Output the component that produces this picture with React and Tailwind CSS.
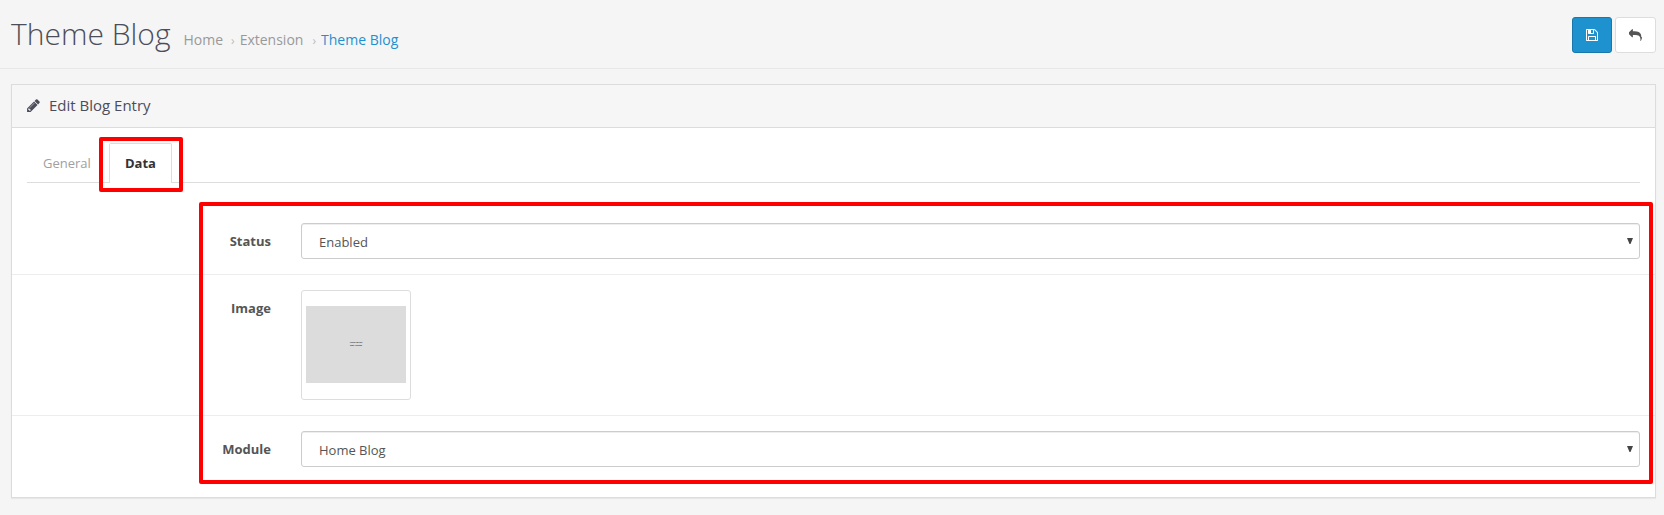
const PENCIL =
  'M491 1536l91-91-235-235-91 91v107h128v128h107zm523-928q0-22-22-22-10 0-17 7l-542 542q-7 7-7 17 0 22 22 22 10 0 17-7l542-542q7-7 7-17zm-54-192l416 416-832 832h-416v-416zm683 96q0 53-37 90l-166 166-416-416 166-165q36-38 90-38 53 0 91 38l235 234q37 39 37 91z';
const FLOPPY =
  'M512 1536h768v-384h-768v384zm896 0h128v-896q0-14-10-38.500t-20-34.500l-281-281q-10-10-34-20t-39-10v416q0 40-28 68t-68 28h-576q-40 0-68-28t-28-68v-416h-128v1280h128v-416q0-40 28-68t68-28h832q40 0 68 28t28 68v416zm-384-928v-320q0-13-9.500-22.500t-22.500-9.500h-192q-13 0-22.500 9.500t-9.500 22.500v320q0 13 9.500 22.500t22.500 9.500h192q13 0 22.500-9.500t9.500-22.500zm640 32v928q0 40-28 68t-68 28h-1344q-40 0-68-28t-28-68v-1344q0-40 28-68t68-28h928q40 0 88 20t76 48l280 280q28 28 48 76t20 88z';
const REPLY =
  'M1792 1120q0 166-127 451-3 7-10.500 24t-13.500 30-13 22q-12 17-28 17-15 0-23.500-10t-8.500-25q0-9 2.500-26.500t2.500-23.500q5-68 5-123 0-112-19.500-200.500t-54-153.500-89-112-120-77-152-49.500-180-24.500-206.500-8h-224v256q0 26-19 45t-45 19-45-19l-512-512q-19-19-19-45t19-45l512-512q19-19 45-19t45 19 19 45v256h224q713 0 875 403 53 134 53 333z';

function Icon({ d, className }) {
  return (
    <svg viewBox="0 0 1792 1792" fill="currentColor" className={className}>
      <path d={d} />
    </svg>
  );
}

function Row({ label, className, children }) {
  return (
    <div className={`flex ${className}`}>
      <label className="w-[259px] shrink-0 pt-[9px] text-right text-[13px] leading-[18px] font-bold text-[#555]">
        {label}
      </label>
      <div className="ml-[30px] flex-1">{children}</div>
    </div>
  );
}

function Select({ value }) {
  return (
    <div className="flex h-9 items-center justify-between rounded-[3px] border border-[#ccc] bg-white pr-[6px] pl-[17px] text-[13px] text-[#555] shadow-[inset_0_1px_1px_rgba(0,0,0,0.075)]">
      <span className="pt-[3px]">{value}</span>
      <svg viewBox="0 0 6 6" className="mb-[1px] h-[6px] w-[6px]" fill="#444">
        <path d="M0 0h6L3.500 6h-1z" />
      </svg>
    </div>
  );
}

export default function App() {
  return (
    <div className="relative h-[515px] w-[1664px] overflow-hidden bg-[#f5f5f5] font-['Open_Sans',sans-serif] text-[13px] text-[#666]">
      <header className="flex h-[69px] justify-between border-b border-[#e7e7e7] pr-2 pl-[11px]">
        <div className="flex items-baseline pt-[14px]">
          <h1 className="text-[30px] leading-[40px] font-light text-[#4c4d5a]">Theme Blog</h1>
          <nav className="ml-[13px] flex items-baseline text-[14px] text-[#999]">
            <span>Home</span>
            <span className="mr-[5px] ml-[8px] text-[12px] text-[#bbb]">›</span>
            <span>Extension</span>
            <span className="mr-[5px] ml-[9px] text-[12px] text-[#bbb]">›</span>
            <span className="text-[#1e91cf]">Theme Blog</span>
          </nav>
        </div>
        <div className="flex gap-[3px] pt-[17px]">
          <button className="flex h-9 w-10 items-center justify-center rounded-[3px] border border-[#1978ab] bg-[#1e91cf] text-white">
            <Icon d={FLOPPY} className="h-[14px] w-[14px]" />
          </button>
          <button className="flex h-9 w-[41px] items-center justify-center rounded-[3px] border border-[#ddd] bg-white text-[#555]">
            <Icon d={REPLY} className="h-[13px] w-[13px]" />
          </button>
        </div>
      </header>

      <main className="mt-[15px] mr-2 ml-[11px] h-[414px] border border-[#dcdcdc] bg-white shadow-[0_1px_1px_rgba(0,0,0,0.05)]">
        <div className="flex h-[43px] items-center border-b border-[#dcdcdc] bg-[#f6f6f6] pb-[2px] pl-[14px] text-[#4c4d5a]">
          <Icon d={PENCIL} className="h-[15px] w-[15px]" />
          <h3 className="ml-[8px] text-[15px]">Edit Blog Entry</h3>
        </div>

        <div className="mx-[15px] mt-[15px] flex h-10 border-b border-[#ddd]">
          <div className="w-[82px] pt-[11px] pl-4 leading-[18px] text-[#a0a0a0]">General</div>
          <div className="h-10 w-[63px] rounded-t-[2px] border border-b-0 border-[#ddd] bg-white pt-[10px] text-center leading-[18px] font-bold text-[#333]">
            Data
          </div>
        </div>

        <Row label="Status" className="mt-[40px] h-[52px] border-b border-[#ededed] pr-[15px]">
          <Select value="Enabled" />
        </Row>
        <Row label="Image" className="h-[141px] border-b border-[#ededed] pt-[15px] pr-[15px]">
          <div className="flex h-[110px] w-[110px] justify-center rounded-[3px] border border-[#ddd] bg-white pt-[15px]">
            <div className="flex h-[77px] w-[100px] flex-col items-center justify-center bg-[#dcdcdc] text-[2px] leading-[2.5px] font-bold text-[#333]">
              <span>YOUR IMAGE</span>
              <span>NOT FOUND</span>
            </div>
          </div>
        </Row>
        <Row label="Module" className="pt-[15px] pr-[15px]">
          <Select value="Home Blog" />
        </Row>
      </main>

      {/* Highlight frames over the active tab and the form */}
      <div className="absolute top-[137px] left-[99px] h-[55px] w-[84px] rounded-[2px] border-4 border-[#f00]" />
      <div className="absolute top-[202px] left-[199px] h-[282px] w-[1454px] rounded-[2px] border-4 border-[#f00]" />
    </div>
  );
}
